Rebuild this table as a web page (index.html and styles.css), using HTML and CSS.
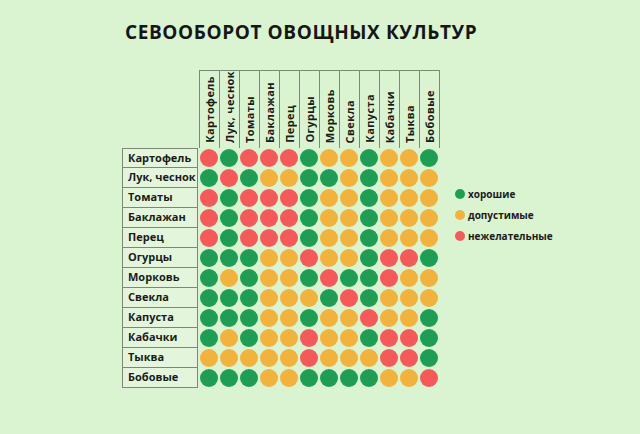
FILE: index.html
```html
<!DOCTYPE html>
<html lang="ru">
<head>
<meta charset="utf-8">
<title>Севооборот овощных культур</title>
<link rel="stylesheet" href="styles.css">
</head>
<body>
<div class="page">
  <h1 class="title">СЕВООБОРОТ ОВОЩНЫХ КУЛЬТУР</h1>
  <div class="main">
    <div class="chart" id="chart">
      <div class="corner"></div>
      <div class="hcell"><span>Картофель</span></div>
      <div class="hcell"><span>Лук, чеснок</span></div>
      <div class="hcell"><span>Томаты</span></div>
      <div class="hcell"><span>Баклажан</span></div>
      <div class="hcell"><span>Перец</span></div>
      <div class="hcell"><span>Огурцы</span></div>
      <div class="hcell"><span>Морковь</span></div>
      <div class="hcell"><span>Свекла</span></div>
      <div class="hcell"><span>Капуста</span></div>
      <div class="hcell"><span>Кабачки</span></div>
      <div class="hcell"><span>Тыква</span></div>
      <div class="hcell last"><span>Бобовые</span></div>

      <div class="label first">Картофель</div>
      <i class="d r"></i><i class="d g"></i><i class="d r"></i><i class="d r"></i><i class="d r"></i><i class="d g"></i><i class="d y"></i><i class="d y"></i><i class="d g"></i><i class="d y"></i><i class="d y"></i><i class="d g"></i>

      <div class="label">Лук, чеснок</div>
      <i class="d g"></i><i class="d r"></i><i class="d g"></i><i class="d y"></i><i class="d y"></i><i class="d g"></i><i class="d g"></i><i class="d y"></i><i class="d g"></i><i class="d y"></i><i class="d y"></i><i class="d y"></i>

      <div class="label">Томаты</div>
      <i class="d r"></i><i class="d g"></i><i class="d r"></i><i class="d r"></i><i class="d r"></i><i class="d g"></i><i class="d y"></i><i class="d y"></i><i class="d g"></i><i class="d y"></i><i class="d y"></i><i class="d y"></i>

      <div class="label">Баклажан</div>
      <i class="d r"></i><i class="d g"></i><i class="d r"></i><i class="d r"></i><i class="d r"></i><i class="d g"></i><i class="d y"></i><i class="d y"></i><i class="d g"></i><i class="d y"></i><i class="d y"></i><i class="d y"></i>

      <div class="label">Перец</div>
      <i class="d r"></i><i class="d g"></i><i class="d r"></i><i class="d r"></i><i class="d r"></i><i class="d g"></i><i class="d y"></i><i class="d y"></i><i class="d g"></i><i class="d y"></i><i class="d y"></i><i class="d y"></i>

      <div class="label">Огурцы</div>
      <i class="d g"></i><i class="d g"></i><i class="d g"></i><i class="d y"></i><i class="d y"></i><i class="d r"></i><i class="d y"></i><i class="d y"></i><i class="d g"></i><i class="d r"></i><i class="d r"></i><i class="d g"></i>

      <div class="label">Морковь</div>
      <i class="d g"></i><i class="d y"></i><i class="d g"></i><i class="d y"></i><i class="d y"></i><i class="d g"></i><i class="d r"></i><i class="d g"></i><i class="d g"></i><i class="d r"></i><i class="d y"></i><i class="d y"></i>

      <div class="label">Свекла</div>
      <i class="d g"></i><i class="d g"></i><i class="d g"></i><i class="d y"></i><i class="d y"></i><i class="d y"></i><i class="d g"></i><i class="d r"></i><i class="d g"></i><i class="d y"></i><i class="d y"></i><i class="d y"></i>

      <div class="label">Капуста</div>
      <i class="d g"></i><i class="d g"></i><i class="d g"></i><i class="d y"></i><i class="d y"></i><i class="d g"></i><i class="d y"></i><i class="d y"></i><i class="d r"></i><i class="d y"></i><i class="d y"></i><i class="d g"></i>

      <div class="label">Кабачки</div>
      <i class="d g"></i><i class="d y"></i><i class="d g"></i><i class="d y"></i><i class="d y"></i><i class="d r"></i><i class="d y"></i><i class="d y"></i><i class="d g"></i><i class="d r"></i><i class="d r"></i><i class="d g"></i>

      <div class="label">Тыква</div>
      <i class="d y"></i><i class="d y"></i><i class="d y"></i><i class="d y"></i><i class="d y"></i><i class="d r"></i><i class="d y"></i><i class="d y"></i><i class="d y"></i><i class="d r"></i><i class="d r"></i><i class="d g"></i>

      <div class="label">Бобовые</div>
      <i class="d g"></i><i class="d g"></i><i class="d g"></i><i class="d y"></i><i class="d y"></i><i class="d g"></i><i class="d g"></i><i class="d g"></i><i class="d g"></i><i class="d y"></i><i class="d y"></i><i class="d r"></i>
    </div>

    <ul class="legend">
      <li class="item"><i class="ldot g"></i>хорошие</li>
      <li class="item"><i class="ldot y"></i>допустимые</li>
      <li class="item item-last"><i class="ldot r"></i>нежелательные</li>
    </ul>
  </div>
</div>
</body>
</html>
```

FILE: styles.css
```css
html, body {
  margin: 0;
  padding: 0;
}
body {
  background: #daf3d0;
  font-family: "Open Sans", "Noto Sans", "Liberation Sans", sans-serif;
  color: #1b1b1b;
  width: 640px;
  height: 434px;
  overflow: hidden;
}
.page {
  padding-top: 23px;
}
.title {
  margin: 0 0 0 125px;
  font-size: 19px;
  line-height: 19px;
  font-weight: 700;
  letter-spacing: 0.6px;
  color: #161616;
  white-space: nowrap;
}
.main {
  display: flex;
  align-items: flex-start;
  margin-top: 28px;
  margin-left: 122px;
}
.chart {
  display: grid;
  grid-template-columns: 77px repeat(12, 20px);
  grid-template-rows: 78px repeat(12, 20px);
}
.corner {
  grid-column: 1;
}
.hcell {
  border-left: 1px solid #7c8777;
  border-top: 1px solid #7c8777;
  display: flex;
  align-items: flex-end;
  justify-content: center;
  padding-bottom: 5px;
  box-sizing: border-box;
}
.hcell.last {
  border-right: 1px solid #7c8777;
  width: 21px;
}
.hcell span {
  writing-mode: vertical-rl;
  transform: rotate(180deg);
  font-size: 11px;
  font-weight: 700;
  line-height: 12px;
  white-space: nowrap;
  letter-spacing: 0.4px;
}
.label {
  grid-column: 1;
  border: 1px solid #7c8777;
  border-top: none;
  background: #e3f5da;
  font-size: 11px;
  font-weight: 700;
  line-height: 18px;
  padding-left: 5px;
  box-sizing: border-box;
  white-space: nowrap;
  margin-right: 1px;
}
.label.first {
  border-top: 1px solid #7c8777;
}
.d {
  display: block;
  width: 18px;
  height: 18px;
  border-radius: 50%;
  margin: 1px 0 0 1px;
}
.g { background: #1f9d55; }
.y { background: #f2b23e; }
.r { background: #f45a5a; }

.legend {
  list-style: none;
  margin: 119px 0 0 16px;
  padding: 0;
}
.item {
  display: flex;
  align-items: center;
  font-size: 10px;
  font-weight: 700;
  line-height: 10px;
  height: 10px;
  margin-bottom: 11px;
  white-space: nowrap;
}
.item + .item.item-last {
  margin-top: 3px;
}
.ldot {
  display: block;
  width: 10px;
  height: 10px;
  border-radius: 50%;
  margin-right: 3px;
}
```
